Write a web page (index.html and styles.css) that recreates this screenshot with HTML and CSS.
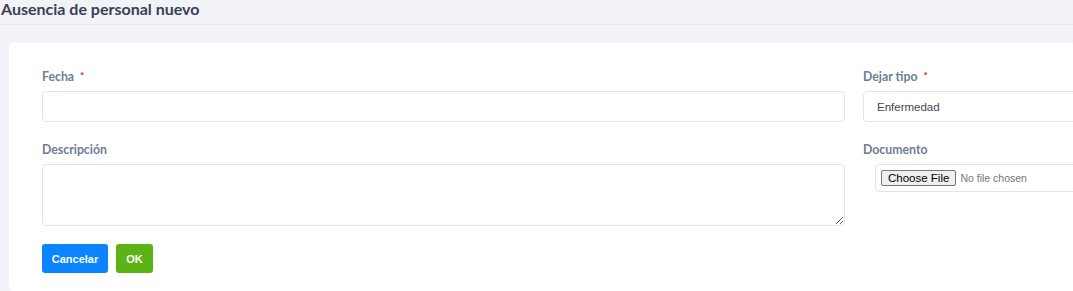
FILE: index.html
```html
<!DOCTYPE html>
<html lang="es">
<head>
<meta charset="utf-8">
<title>Ausencia de personal nuevo</title>
<link rel="stylesheet" href="styles.css">
</head>
<body>
<header class="page-header">
  <h1 class="page-title">Ausencia de personal nuevo</h1>
</header>
<main class="card">
  <form class="form-grid">
    <div class="field">
      <label class="field-label">Fecha <span class="req">*</span></label>
      <input class="control" type="text">
    </div>
    <div class="field">
      <label class="field-label">Dejar tipo <span class="req">*</span></label>
      <div class="control select-control">Enfermedad</div>
    </div>
    <div class="field">
      <label class="field-label">Descripción</label>
      <textarea class="control textarea"></textarea>
    </div>
    <div class="field">
      <label class="field-label">Documento</label>
      <div class="file-box"><input type="file" class="file-input"></div>
    </div>
  </form>
  <div class="actions">
    <button class="btn btn-blue" type="button">Cancelar</button>
    <button class="btn btn-green" type="button">OK</button>
  </div>
</main>
</body>
</html>
```
FILE: styles.css
```css
html, body {
  margin: 0;
  padding: 0;
  background: #f2f3f8;
  overflow: hidden;
  width: 1073px;
  height: 291px;
}
body {
  font-family: Lato, "Liberation Sans", sans-serif;
}
.page-header {
  height: 25px;
  border-bottom: 1px solid #e5e7ee;
  box-sizing: border-box;
}
.page-title {
  margin: 0;
  padding-left: 1px;
  font-size: 16px;
  line-height: 18px;
  font-weight: 700;
  color: #3a3f56;
}
.card {
  margin-top: 18px;
  margin-left: 9px;
  background: #fff;
  border-radius: 4px 0 0 4px;
  padding: 25px 0 18px 33px;
  box-sizing: border-box;
  height: 248px;
  overflow: hidden;
}
.form-grid {
  display: grid;
  grid-template-columns: 803px 300px;
  column-gap: 18px;
  row-gap: 19px;
}
.field {
  display: flex;
  flex-direction: column;
}
.field-label {
  font-size: 12.3px;
  line-height: 18px;
  font-weight: 700;
  color: #6f7d97;
  margin-bottom: 5px;
}
.req {
  color: #e0102a;
  font-size: 10px;
  position: relative;
  top: -2px;
  margin-left: 3px;
}
.control {
  box-sizing: border-box;
  height: 31px;
  border: 1px solid #e2e4ed;
  border-radius: 4px;
  background: #fff;
  margin: 0;
  padding: 0 13px;
  font-family: "Liberation Sans", Arial, sans-serif;
  font-size: 11.5px;
  color: #3f4652;
  outline: none;
}
.select-control {
  display: flex;
  align-items: center;
}
.textarea {
  height: 62px;
  resize: vertical;
  padding: 6px 13px;
}
.file-box {
  margin-left: 12px;
  height: 28px;
  box-sizing: border-box;
  border: 1px solid #e2e4ed;
  border-radius: 4px;
  display: flex;
  align-items: center;
  padding-left: 5px;
}
.file-input {
  font-family: "Liberation Sans", Arial, sans-serif;
  font-size: 10.5px;
  color: #777;
}
.file-input::file-selector-button {
  font-family: "Liberation Sans", Arial, sans-serif;
  font-size: 11.5px;
  color: #000;
  background: #efefef;
  border: 1px solid #767676;
  border-radius: 2px;
  padding: 1px 6px;
  margin-right: 4px;
}
.actions {
  display: flex;
  gap: 8px;
  margin-top: 18px;
}
.btn {
  height: 29px;
  border: none;
  border-radius: 3px;
  color: #fff;
  font-family: "Liberation Sans", Arial, sans-serif;
  font-size: 11px;
  font-weight: 700;
  padding: 0;
}
.btn-blue {
  background: #0a84ff;
  width: 66px;
}
.btn-green {
  background: #5cb316;
  width: 37px;
}
```
